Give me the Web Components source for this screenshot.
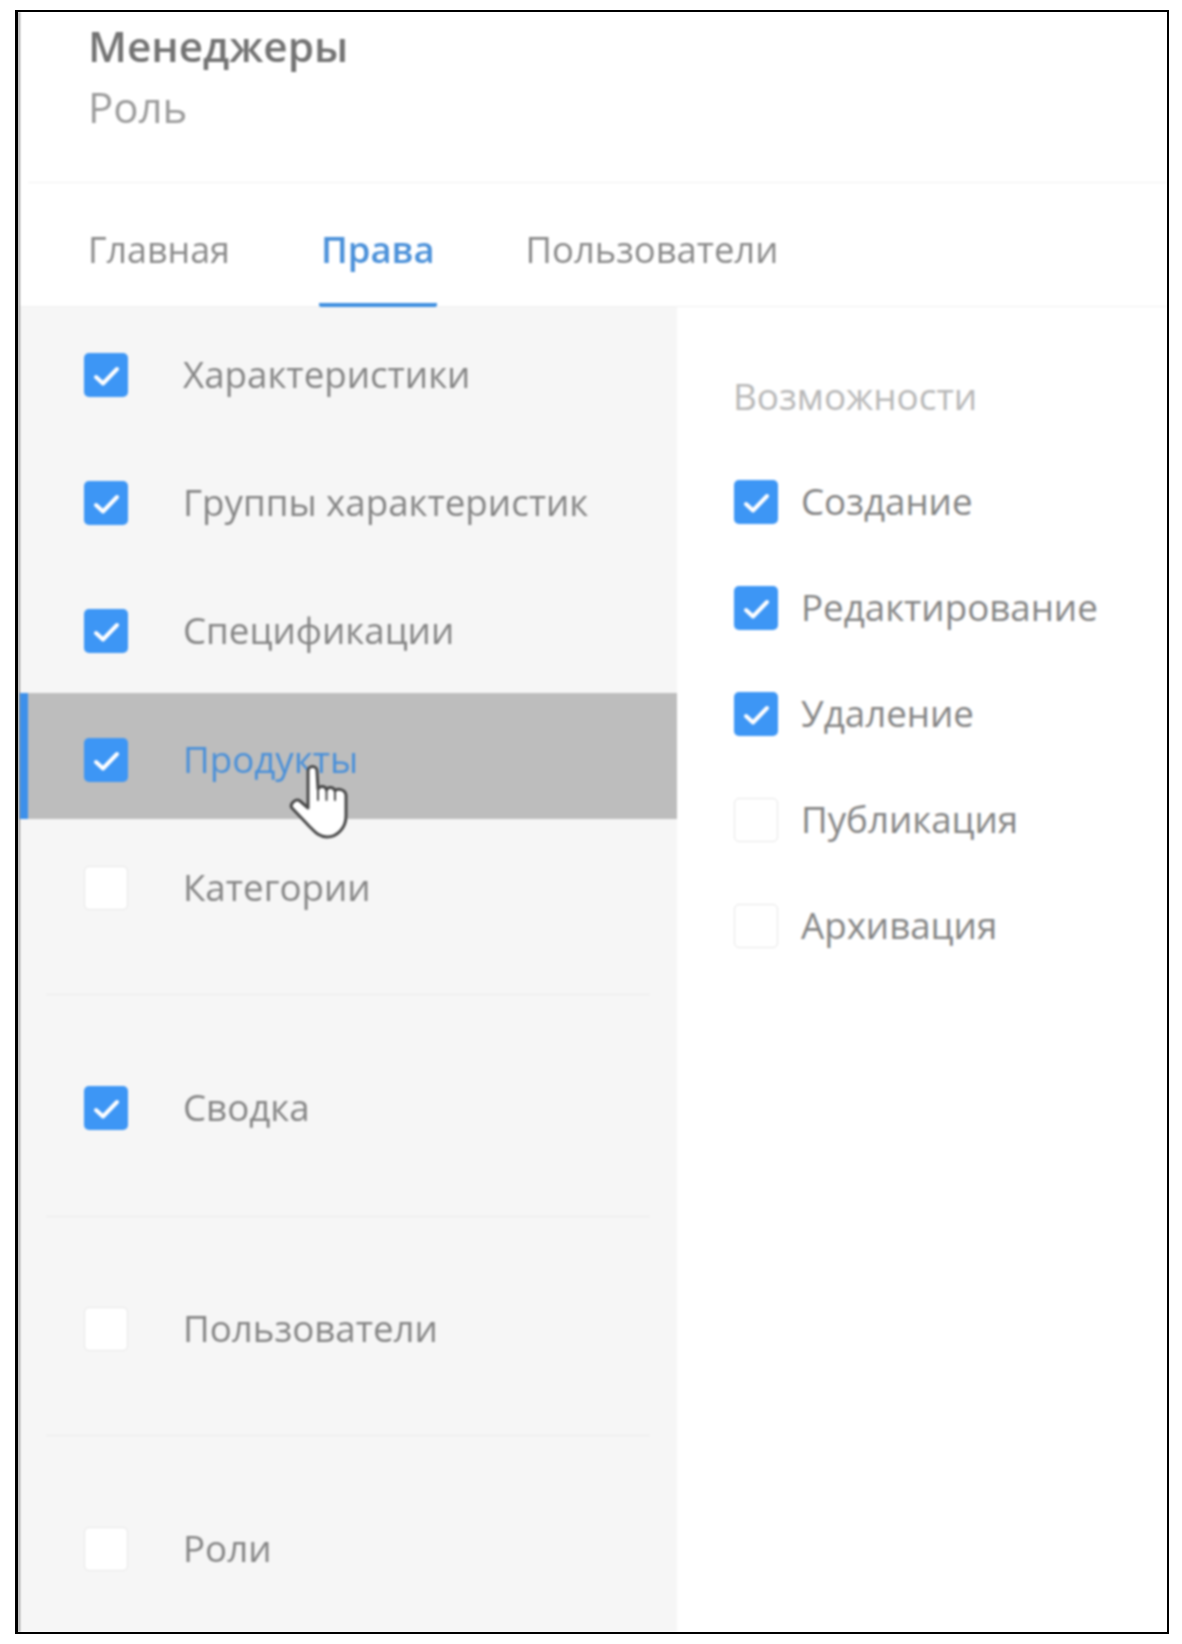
<!DOCTYPE html>
<html lang="ru">
<head>
<meta charset="utf-8">
<title>Роль</title>
<style>
  html, body { margin: 0; background: #fff; }
  body { font-family: "Open Sans", "Liberation Sans", sans-serif; }
</style>
</head>
<body>
<role-page>
  <role-header slot="header" name="Менеджеры" kind="Роль"></role-header>
  <tab-bar slot="tabs">
    <tab-item style="font-size: 35.8px">Главная</tab-item>
    <tab-item active>Права</tab-item>
    <tab-item>Пользователи</tab-item>
  </tab-bar>
  <perm-sidebar slot="sidebar">
    <perm-item checked>Характеристики</perm-item>
    <perm-item checked>Группы характеристик</perm-item>
    <perm-item checked>Спецификации</perm-item>
    <perm-item checked active>Продукты<hand-cursor slot="over"></hand-cursor></perm-item>
    <perm-item>Категории</perm-item>
    <perm-divider style="--before: 45px; --after: 43px"></perm-divider>
    <perm-item checked>Сводка</perm-item>
    <perm-divider style="--before: 46px; --after: 42px"></perm-divider>
    <perm-item>Пользователи</perm-item>
    <perm-divider style="--before: 44px; --after: 44px"></perm-divider>
    <perm-item>Роли</perm-item>
  </perm-sidebar>
  <perm-actions slot="actions" heading="Возможности">
    <perm-item compact checked>Создание</perm-item>
    <perm-item compact checked>Редактирование</perm-item>
    <perm-item compact checked>Удаление</perm-item>
    <perm-item compact>Публикация</perm-item>
    <perm-item compact>Архивация</perm-item>
  </perm-actions>
</role-page>

<script>
class RolePage extends HTMLElement {
  connectedCallback() {
    this.attachShadow({mode: 'open'}).innerHTML = `
      <style>
        :host {
          display: block;
          padding: 10px 13px 10px 15px;
          height: 1644px;
          box-sizing: border-box;
        }
        .frame {
          height: 100%;
          box-sizing: border-box;
          border: 2px solid #000;
          border-left-width: 3px;
          display: flex;
          flex-direction: column;
          overflow: hidden;
        }
        .inner {
          flex: 1;
          min-height: 0;
          display: flex;
          flex-direction: column;
          border-left: 2px solid #9a9a9a;
          filter: blur(0.8px);
        }
        .body {
          flex: 1;
          min-height: 0;
          display: grid;
          grid-template-columns: 657px 1fr;
        }
      </style>
      <div class="frame">
        <div class="inner">
          <slot name="header"></slot>
          <slot name="tabs"></slot>
          <div class="body">
            <slot name="sidebar"></slot>
            <slot name="actions"></slot>
          </div>
        </div>
      </div>
    `;
  }
}
customElements.define('role-page', RolePage);

class RoleHeader extends HTMLElement {
  connectedCallback() {
    this.attachShadow({mode: 'open'}).innerHTML = `
      <style>
        :host {
          display: block;
          height: 171px;
          box-sizing: border-box;
          padding: 10px 0 0 60px;
          margin-left: 8px;
          border-bottom: 1px solid #f1f1f1;
        }
        p { margin: 0; }
        .name {
          font-size: 42.3px;
          line-height: 48px;
          font-weight: 600;
          color: #737373;
        }
        .kind {
          margin-top: 13px;
          font-size: 42px;
          line-height: 48px;
          color: #9b9b9b;
        }
      </style>
      <p class="name">${this.getAttribute('name')}</p>
      <p class="kind">${this.getAttribute('kind')}</p>
    `;
  }
}
customElements.define('role-header', RoleHeader);

class TabBar extends HTMLElement {
  connectedCallback() {
    this.attachShadow({mode: 'open'}).innerHTML = `
      <style>
        :host {
          display: flex;
          gap: 89px;
          height: 124px;
          box-sizing: border-box;
          padding-left: 68px;
          border-bottom: 1px solid #f1f1f1;
        }
      </style>
      <slot></slot>
    `;
  }
}
customElements.define('tab-bar', TabBar);

class TabItem extends HTMLElement {
  connectedCallback() {
    this.attachShadow({mode: 'open'}).innerHTML = `
      <style>
        :host {
          display: block;
          height: 124px;
          box-sizing: border-box;
          padding-top: 42px;
          font-size: 36.4px;
          line-height: 48px;
          color: #8a8a8a;
        }
        :host([active]) {
          padding-left: 2px;
          padding-right: 2px;
          color: #4a90d9;
          font-weight: 600;
          border-bottom: 4px solid #3f8fe0;
          border-radius: 0 0 2px 2px;
        }
      </style>
      <slot></slot>
    `;
  }
}
customElements.define('tab-item', TabItem);

class PermSidebar extends HTMLElement {
  connectedCallback() {
    this.attachShadow({mode: 'open'}).innerHTML = `
      <style>
        :host {
          display: flex;
          flex-direction: column;
          gap: 3.3px;
          padding-top: 1px;
          background: #f6f6f6;
          overflow: hidden;
        }
      </style>
      <slot></slot>
    `;
  }
}
customElements.define('perm-sidebar', PermSidebar);

class PermDivider extends HTMLElement {
  connectedCallback() {
    this.attachShadow({mode: 'open'}).innerHTML = `
      <style>
        :host {
          display: block;
          height: 1px;
          margin: var(--before, 45px) 27px var(--after, 44px) 26px;
          background: #ebebeb;
        }
      </style>
    `;
  }
}
customElements.define('perm-divider', PermDivider);

class PermActions extends HTMLElement {
  connectedCallback() {
    this.attachShadow({mode: 'open'}).innerHTML = `
      <style>
        :host {
          display: flex;
          flex-direction: column;
          padding: 66px 0 0 57px;
          background: #fff;
        }
        h3 {
          margin: 0 0 59px -1px;
          font-size: 36.9px;
          line-height: 46px;
          font-weight: 400;
          color: #b8b8b8;
        }
        .list {
          display: flex;
          flex-direction: column;
          gap: 58px;
        }
      </style>
      <h3>${this.getAttribute('heading')}</h3>
      <div class="list"><slot></slot></div>
    `;
  }
}
customElements.define('perm-actions', PermActions);

class PermItem extends HTMLElement {
  connectedCallback() {
    this.attachShadow({mode: 'open'}).innerHTML = `
      <style>
        :host {
          display: flex;
          align-items: center;
          position: relative;
          height: 125px;
          box-sizing: border-box;
          padding: 8px 0 0 64px;
          gap: 55px;
          font-size: 36.7px;
          line-height: 48px;
          color: #858585;
        }
        :host([compact]) {
          height: 48px;
          padding: 0;
          gap: 23px;
        }
        :host([active]) {
          height: 126px;
          margin-bottom: -1px;
          background: #bdbdbd;
          color: #4a90d9;
          padding-left: 56px;
          border-left: 8px solid #3d90ea;
        }
        .box {
          flex: none;
          width: 44px;
          height: 44px;
          box-sizing: border-box;
          border-radius: 5px;
          background: #fff;
          border: 1.5px solid #e6e6e6;
          display: flex;
        }
        :host([checked]) .box {
          background: #3d96f5;
          border: 0;
        }
        svg { display: none; width: 44px; height: 44px; }
        :host([checked]) svg { display: block; }
        .label { position: relative; top: -1px; }
      </style>
      <span class="box">
        <svg viewBox="0 0 44 44" fill="none" stroke="#fff" stroke-width="4" stroke-linecap="round" stroke-linejoin="round">
          <path d="M12 24 L19 30.5 L33 16"/>
        </svg>
      </span>
      <span class="label"><slot></slot></span>
      <slot name="over"></slot>
    `;
  }
}
customElements.define('perm-item', PermItem);

class HandCursor extends HTMLElement {
  connectedCallback() {
    this.attachShadow({mode: 'open'}).innerHTML = `
      <style>
        :host {
          position: absolute;
          left: 259px;
          top: 69px;
          width: 66px;
          height: 78px;
        }
        svg { display: block; }
      </style>
      <svg width="66" height="78" viewBox="0 0 66 78">
        <path fill="#fff" stroke="#4a4a4a" stroke-width="3" stroke-linejoin="round" stroke-linecap="round"
          d="M21 9 C21 3 30 3 30 9 L31 27 C33 23 39 24 39.500 28 C41 24 47 25 48 29 C50 26 58 27 59 33
             L59 54 C59 66 50 75 40 75 C32 75 28 70 22 64 L5 46 C2 42 9 36 13 39 L21 46 Z"/>
        <path fill="none" stroke="#4a4a4a" stroke-width="2" stroke-linecap="round" d="M31 27 L31 38 M39.500 28 L39.500 38 M48 29 L48 38"/>
      </svg>
    `;
  }
}
customElements.define('hand-cursor', HandCursor);
</script>
</body>
</html>
